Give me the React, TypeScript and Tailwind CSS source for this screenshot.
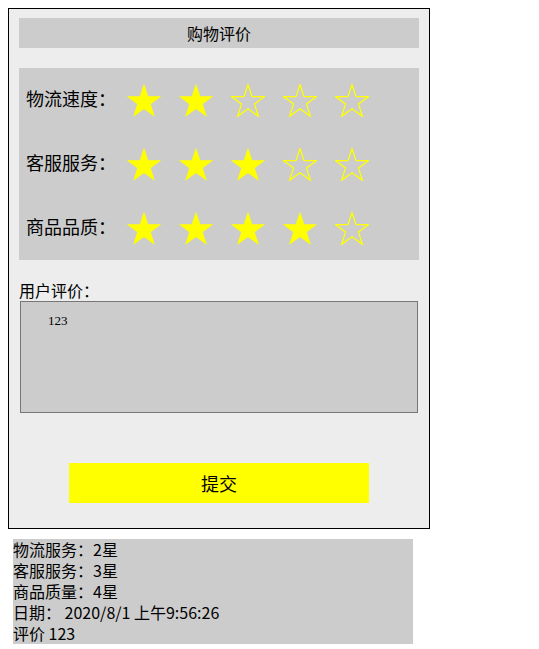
import React from "react";

const ratings = [
  { label: "物流速度：", value: 2 },
  { label: "客服服务：", value: 3 },
  { label: "商品品质：", value: 4 },
];

const STAR_POINTS =
  "17,0.5 21.02,12.6 33.5,12.6 23.5,20.1 27.4,32.3 17,24.8 6.6,32.3 10.5,20.1 0.5,12.6 12.98,12.6";

function Star({ filled }: { filled: boolean }) {
  return (
    <svg width="34" height="33" viewBox="0 0 34 33" className="shrink-0">
      <polygon
        points={STAR_POINTS}
        fill={filled ? "#ffff00" : "none"}
        stroke="#ffff00"
        strokeWidth={filled ? 0.6 : 1.3}
        strokeLinejoin="miter"
      />
    </svg>
  );
}

export default function App() {
  const sans = "font-['Microsoft_YaHei','Noto_Sans_CJK_SC',sans-serif]";
  const serif = "font-['Liberation_Serif','Noto_Sans_CJK_SC',serif]";

  return (
    <div className={`${sans} text-black`}>
      <div className="ml-2 mt-2 w-[422px] border border-black bg-[#ededed] px-[10px] pt-[9px] pb-[25px]">
        {/* title */}
        <div className="flex h-[30px] items-center justify-center bg-[#cccccc] text-[16px]">
          购物评价
        </div>

        {/* ratings */}
        <div className="mt-5 bg-[#cccccc]">
          {ratings.map((r) => (
            <div key={r.label} className="flex h-16 items-center pl-[7px]">
              <span className={`${serif} w-[101px] text-[18px] leading-none`}>{r.label}</span>
              <div className="flex gap-[18px]">
                {[1, 2, 3, 4, 5].map((n) => (
                  <Star key={n} filled={n <= r.value} />
                ))}
              </div>
            </div>
          ))}
        </div>

        {/* comment */}
        <div className="mt-5 text-[16px] leading-[21px]">用户评价：</div>
        <div
          className={`${serif} ml-px h-[112px] w-[398px] border border-[#777777] bg-[#cccccc] pl-[27px] pt-[12px] text-[13px] leading-[13px]`}
        >
          123
        </div>

        {/* submit */}
        <div className="mt-[50px] flex justify-center">
          <button className="flex h-10 w-[300px] items-center justify-center bg-[#ffff00] text-[18px]">
            提交
          </button>
        </div>
      </div>

      {/* result */}
      <div className="ml-[13px] mt-[10px] w-[400px] bg-[#cccccc] text-[16px] leading-[21px]">
        <div>物流服务：2星</div>
        <div>客服服务：3星</div>
        <div>商品质量：4星</div>
        <div>日期： 2020/8/1 上午9:56:26</div>
        <div>评价 123</div>
      </div>
    </div>
  );
}
